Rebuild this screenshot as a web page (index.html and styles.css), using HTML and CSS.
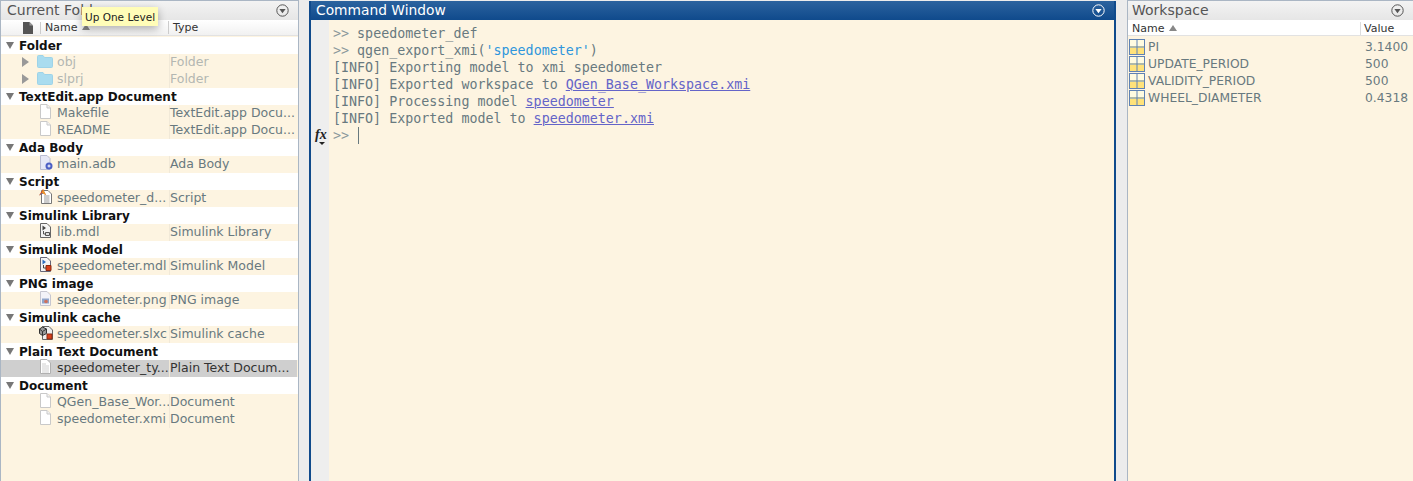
FILE: index.html
```html
<!DOCTYPE html>
<html lang="en">
<head>
<meta charset="utf-8">
<title>MATLAB</title>
<link rel="stylesheet" href="styles.css">
</head>
<body>
<svg class="defs" width="0" height="0" aria-hidden="true">
  <defs>
    <symbol id="menu" viewBox="0 0 13 13"><circle cx="6.5" cy="6.500" r="5.700" fill="none" stroke="currentColor" stroke-width="1"/><path d="M3.400 5h6.200L6.500 9.200z" fill="currentColor"/></symbol>
    <symbol id="doc" viewBox="0 0 14 15"><path d="M1.500.5h6.500l3.500 3.500v10.500h-10z" fill="#fff" stroke="#c9c9c9"/><path d="M8 .5V4h3.500" fill="#f2f2f2" stroke="#c9c9c9"/></symbol>
    <symbol id="textdoc" viewBox="0 0 14 15"><path d="M1.500.5h6.500l3.500 3.500v10.500h-10z" fill="#fff" stroke="#b0b0b0"/><path d="M3 5h4M3 7h7M3 9h7M3 11h7M3 13h7" stroke="#d0d0d0"/></symbol>
    <symbol id="folder" viewBox="0 0 16 13"><path d="M.5 2V11.500q0 1 1 1h13q1 0 1-1V3.500q0-1-1-1H7.500L6 .5H1.500q-1 0-1 1z" fill="#a9dcef" stroke="#9dd3e8"/></symbol>
    <symbol id="ada" viewBox="0 0 14 15"><path d="M1.500.5h6.500l3 3v11h-9.500z" fill="#e6e8f6" stroke="#b9bcd2"/><circle cx="10" cy="11" r="3.500" fill="#4c5fc4"/><path d="M8.500 11h3M10 9.500v3" stroke="#fff"/></symbol>
    <symbol id="script" viewBox="0 0 14 15"><path d="M2.500 1.500h6.500l3.500 3.500v9.500h-10z" fill="#fff" stroke="#777"/><path d="M5 7h5.500M5 9h5.500M5 11h5.500M5 13h5.500" stroke="#999"/><path d="M0 6.500L4 0l3 6-3-1.500z" fill="#d8501c"/><path d="M4 0l-1 4 1 .5 3 1.500z" fill="#e89a30"/><path d="M0 6.500L3 4l1 .5z" fill="#3f6fb8"/></symbol>
    <symbol id="lib" viewBox="0 0 14 15"><path d="M1.500.5h6.500l3.500 3.500v10.500h-10z" fill="#f4f4f4" stroke="#666"/><path d="M3.500 2.500l3.500 2.500-3.500 2.500z" fill="#444"/><path d="M6.500 9.500h4v3h-4z" fill="#ddd" stroke="#555"/><path d="M4.500 8v3h2" fill="none" stroke="#555"/></symbol>
    <symbol id="model" viewBox="0 0 14 15"><path d="M1.500.5h6.500l3.500 3.500v10.500h-10z" fill="#f4f4f4" stroke="#667"/><path d="M3.500 2.500l3.500 2.500-3.500 2.500z" fill="#2f6fc0"/><path d="M7 8.500h5v5H7z" fill="#d8401c" stroke="#8a2a10"/><path d="M4.500 8v3H7" fill="none" stroke="#444"/></symbol>
    <symbol id="png" viewBox="0 0 14 15"><path d="M1.500.5h6.500l3.500 3.500v10.500h-10z" fill="#f3f3f8" stroke="#c6c6d0"/><rect x="3" y="7.500" width="7" height="5" fill="#8fa6cc"/><circle cx="7" cy="10.500" r="1.800" fill="#d0705c"/></symbol>
    <symbol id="cache" viewBox="0 0 14 15"><path d="M3.500 1.500h6.500l3.500 3.500v9.500h-10z" fill="#eee" stroke="#666"/><path d="M.5 4L3.500 2 7.500 4v4.500L3.500 10.500.5 8.500z" fill="#999" stroke="#333"/><path d="M.5 4l3 2.500 4-2.500M3.500 6.500v4" fill="none" stroke="#333"/><path d="M8 9h5v5H8z" fill="#d8401c" stroke="#8a2a10"/></symbol>
    <symbol id="grid" viewBox="0 0 16 16"><rect x=".5" y=".5" width="15" height="15" fill="#fff0a0" stroke="#5f82b4"/><rect x="1" y="1" width="14" height="6" fill="#fffbe0"/><rect x="1" y="9" width="14" height="6" fill="#ffe27a"/><path d="M8 .5v15M.5 8h15" stroke="#5f82b4"/></symbol>
  </defs>
</svg>

<div class="desk">
  <section class="panel files">
    <header class="title"><h2>Current Folder</h2><svg class="menu"><use href="#menu"/></svg></header>
    <div class="colhead">
      <span class="cell-icon"><svg width="10" height="12" viewBox="0 0 10 12"><path d="M0 0h6.500L10 3.500V12H0z" fill="#555"/><path d="M6.500 0v3.500H10z" fill="#999"/></svg></span>
      <span class="cell-name">Name <i class="sort"></i></span>
      <span class="cell-type">Type</span>
    </div>
    <div class="list">
      <div class="group"><i class="twist down"></i>Folder</div>
      <div class="row dim"><i class="twist right"></i><svg class="ic folder"><use href="#folder"/></svg><span class="name">obj</span><span class="type">Folder</span></div>
      <div class="row dim"><i class="twist right"></i><svg class="ic folder"><use href="#folder"/></svg><span class="name">slprj</span><span class="type">Folder</span></div>
      <div class="group"><i class="twist down"></i>TextEdit.app Document</div>
      <div class="row"><svg class="ic"><use href="#doc"/></svg><span class="name">Makefile</span><span class="type">TextEdit.app Docu...</span></div>
      <div class="row"><svg class="ic"><use href="#doc"/></svg><span class="name">README</span><span class="type">TextEdit.app Docu...</span></div>
      <div class="group"><i class="twist down"></i>Ada Body</div>
      <div class="row"><svg class="ic"><use href="#ada"/></svg><span class="name">main.adb</span><span class="type">Ada Body</span></div>
      <div class="group"><i class="twist down"></i>Script</div>
      <div class="row"><svg class="ic"><use href="#script"/></svg><span class="name">speedometer_d...</span><span class="type">Script</span></div>
      <div class="group"><i class="twist down"></i>Simulink Library</div>
      <div class="row"><svg class="ic"><use href="#lib"/></svg><span class="name">lib.mdl</span><span class="type">Simulink Library</span></div>
      <div class="group"><i class="twist down"></i>Simulink Model</div>
      <div class="row"><svg class="ic"><use href="#model"/></svg><span class="name">speedometer.mdl</span><span class="type">Simulink Model</span></div>
      <div class="group"><i class="twist down"></i>PNG image</div>
      <div class="row"><svg class="ic"><use href="#png"/></svg><span class="name">speedometer.png</span><span class="type">PNG image</span></div>
      <div class="group"><i class="twist down"></i>Simulink cache</div>
      <div class="row"><svg class="ic"><use href="#cache"/></svg><span class="name">speedometer.slxc</span><span class="type">Simulink cache</span></div>
      <div class="group"><i class="twist down"></i>Plain Text Document</div>
      <div class="row selected"><svg class="ic"><use href="#textdoc"/></svg><span class="name">speedometer_ty...</span><span class="type">Plain Text Docum...</span></div>
      <div class="group"><i class="twist down"></i>Document</div>
      <div class="row"><svg class="ic"><use href="#doc"/></svg><span class="name">QGen_Base_Wor...</span><span class="type">Document</span></div>
      <div class="row"><svg class="ic"><use href="#doc"/></svg><span class="name">speedometer.xmi</span><span class="type">Document</span></div>
    </div>
    <div class="tooltip">Up One Level</div>
  </section>

  <section class="panel command">
    <header class="title active"><h2>Command Window</h2><svg class="menu"><use href="#menu"/></svg></header>
    <div class="console">
      <div class="gutter"><span class="fx"><em>fx</em><i></i></span></div>
      <pre class="output"><span class="prompt">&gt;&gt;</span> speedometer_def
<span class="prompt">&gt;&gt;</span> qgen_export_xmi(<span class="str">'speedometer'</span>)
[INFO] Exporting model to xmi speedometer
[INFO] Exported workspace to <a>QGen_Base_Workspace.xmi</a>
[INFO] Processing model <a>speedometer</a>
[INFO] Exported model to <a>speedometer.xmi</a>
<span class="prompt">&gt;&gt;</span> <span class="caret"></span></pre>
    </div>
  </section>

  <section class="panel workspace">
    <header class="title"><h2>Workspace</h2><svg class="menu"><use href="#menu"/></svg></header>
    <div class="colhead">
      <span class="ws-name">Name <i class="sort"></i></span>
      <span class="ws-value">Value</span>
    </div>
    <div class="list">
      <div class="ws-row"><svg class="grid"><use href="#grid"/></svg><span class="ws-name">PI</span><span class="ws-value">3.1400</span></div>
      <div class="ws-row"><svg class="grid"><use href="#grid"/></svg><span class="ws-name">UPDATE_PERIOD</span><span class="ws-value">500</span></div>
      <div class="ws-row"><svg class="grid"><use href="#grid"/></svg><span class="ws-name">VALIDITY_PERIOD</span><span class="ws-value">500</span></div>
      <div class="ws-row"><svg class="grid"><use href="#grid"/></svg><span class="ws-name">WHEEL_DIAMETER</span><span class="ws-value">0.4318</span></div>
    </div>
  </section>
</div>
</body>
</html>
```
FILE: styles.css
```css
* { box-sizing: border-box; }
html, body { margin: 0; height: 100%; overflow: hidden; }
body { background: #ececec; font-family: "DejaVu Sans", sans-serif; font-size: 12px; color: #68797f; }
.defs { position: absolute; }
.desk { display: flex; height: 481px; }
.panel { position: relative; display: flex; flex-direction: column; border: 1px solid #aab6c4; border-bottom: 0; background: #fdf4e1; }
.files { width: 299px; }
.command { width: 807px; margin: 1px 0 0 10px; border: 2px solid #0f4a8c; border-top: 0; border-bottom: 0; }
.workspace { width: 286px; margin-left: 11px; border-right: 0; }
.title { flex: none; height: 19px; display: flex; align-items: center; justify-content: space-between; padding: 0 9px 1px 6px; background: linear-gradient(#f3f3f3, #e6e6e6); color: #555; }
.workspace .title { padding-left: 4px; }
.title h2 { margin: 0; font-size: 14px; font-weight: 400; }
.title .menu { margin-top: 1px; }
.title.active { padding-left: 5px; background: linear-gradient(#2c639f, #0f4a8c); color: #fff; }
.title.active h2 { font-size: 13.8px; }
.menu { width: 13px; height: 13px; }
.colhead { flex: none; height: 16px; display: flex; align-items: center; background: linear-gradient(#fff, #f1f1f1); color: #333; font-size: 11px; border-bottom: 1px solid #e2e2e2; }
.cell-icon { width: 40px; display: flex; justify-content: flex-end; padding-right: 7px; border-right: 1px solid #ccc; }
.cell-name { width: 128px; padding-left: 4px; border-right: 1px solid #ccc; }
.cell-type { padding-left: 4px; }
.sort { display: inline-block; border: 4px solid transparent; border-top: 0; border-bottom: 6px solid #888; margin-left: 1px; vertical-align: 1px; }
.list { flex: 1; padding-top: 1px; }
.group, .row, .ws-row { height: 17px; display: flex; white-space: nowrap; }
.group { align-items: center; background: #fff; color: #111; font-weight: 700; font-size: 12px; padding-left: 5px; gap: 5px; }
.row { position: relative; align-items: flex-start; padding-left: 38px; font-size: 12.5px; line-height: 15px; }
.ic { flex: none; width: 14px; height: 15px; margin: -1px 4px 0 0; overflow: visible; }
.ic.folder { width: 16px; height: 13px; margin: 1px 4px 0 -2px; }
.name { flex: none; width: 112px; height: 17px; }
.type { flex: none; border-left: 1px solid #f1e9d8; height: 17px; }
.dim { color: #b3b7b2; }
.selected { background: #cfcfcf; color: #333; margin-right: 1px; }
.twist { flex: none; display: block; border: 0 solid transparent; width: 0; height: 0; }
.twist.down { border-width: 7px 4.5px 0; border-top-color: #777; }
.twist.right { position: absolute; left: 21px; top: 3px; border-width: 5px 0 5px 7px; border-left-color: #999; }
.tooltip { position: absolute; left: 81px; top: 6px; height: 19px; padding: 0 3px; background: #fffdb8; color: #222; font-size: 10.5px; line-height: 20px; box-shadow: 0 3px 9px rgba(0,0,0,.3); }
.console { flex: 1; display: flex; background: #fdf4e1; }
.gutter { width: 18px; background: #eeeeee; position: relative; }
.fx { position: absolute; left: 4px; top: 107px; color: #222; font: italic 700 14px "Liberation Serif", serif; }
.fx em { display: block; line-height: 16px; }
.fx i { position: absolute; left: 4px; top: 15px; border: 3px solid transparent; border-bottom: 0; border-top: 3px solid #222; }
.output { margin: 0; padding: 5px 0 0 4px; font: 13.33px/17px "DejaVu Sans Mono", monospace; color: #68797f; }
.prompt { color: #8a989c; }
.str { color: #2f96dc; }
.output a { color: #6464c8; text-decoration: underline; }
.caret { display: inline-block; width: 1px; height: 17px; background: #68797f; vertical-align: -4px; margin-left: 1px; }
.workspace .colhead { background: #fff; padding: 2px 0 0 4px; }
.colhead .ws-name { width: 229px; border-right: 1px solid #ddd; }
.colhead .ws-value { padding-left: 3px; }
.workspace .list { padding-top: 2px; }
.ws-row .grid { flex: none; width: 16px; height: 16px; margin-right: 3px; }
.ws-row { align-items: center; padding-left: 1px; font-size: 12.3px; }
.ws-row .ws-name { flex: none; width: 217px; }
```
